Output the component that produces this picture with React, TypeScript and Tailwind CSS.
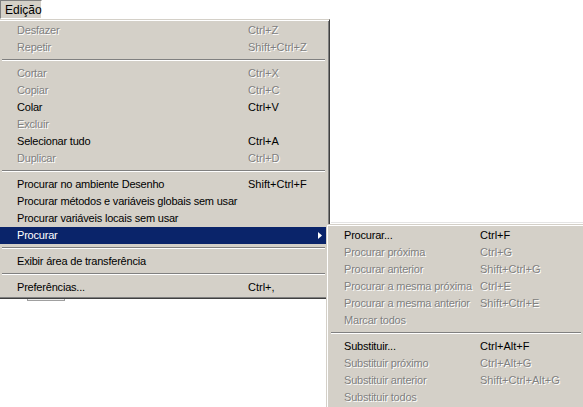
import React from "react";

type Item =
  | { type: "sep" }
  | { type: "item"; label: string; shortcut?: string; disabled?: boolean; active?: boolean; sub?: boolean };

const mainItems: Item[] = [
  { type: "item", label: "Desfazer", shortcut: "Ctrl+Z", disabled: true },
  { type: "item", label: "Repetir", shortcut: "Shift+Ctrl+Z", disabled: true },
  { type: "sep" },
  { type: "item", label: "Cortar", shortcut: "Ctrl+X", disabled: true },
  { type: "item", label: "Copiar", shortcut: "Ctrl+C", disabled: true },
  { type: "item", label: "Colar", shortcut: "Ctrl+V" },
  { type: "item", label: "Excluir", disabled: true },
  { type: "item", label: "Selecionar tudo", shortcut: "Ctrl+A" },
  { type: "item", label: "Duplicar", shortcut: "Ctrl+D", disabled: true },
  { type: "sep" },
  { type: "item", label: "Procurar no ambiente Desenho", shortcut: "Shift+Ctrl+F" },
  { type: "item", label: "Procurar métodos e variáveis globais sem usar" },
  { type: "item", label: "Procurar variáveis locais sem usar" },
  { type: "item", label: "Procurar", active: true, sub: true },
  { type: "sep" },
  { type: "item", label: "Exibir área de transferência" },
  { type: "sep" },
  { type: "item", label: "Preferências...", shortcut: "Ctrl+," },
];

const subItems: Item[] = [
  { type: "item", label: "Procurar...", shortcut: "Ctrl+F" },
  { type: "item", label: "Procurar próxima", shortcut: "Ctrl+G", disabled: true },
  { type: "item", label: "Procurar anterior", shortcut: "Shift+Ctrl+G", disabled: true },
  { type: "item", label: "Procurar a mesma próxima", shortcut: "Ctrl+E", disabled: true },
  { type: "item", label: "Procurar a mesma anterior", shortcut: "Shift+Ctrl+E", disabled: true },
  { type: "item", label: "Marcar todos", disabled: true },
  { type: "sep" },
  { type: "item", label: "Substituir...", shortcut: "Ctrl+Alt+F" },
  { type: "item", label: "Substituir próximo", shortcut: "Ctrl+Alt+G", disabled: true },
  { type: "item", label: "Substituir anterior", shortcut: "Shift+Ctrl+Alt+G", disabled: true },
  { type: "item", label: "Substituir todos", disabled: true },
];

function Sep() {
  return (
    <div className="pt-[3px] pb-[4px] mx-[2px]">
      <div className="h-px bg-[#808080]" />
      <div className="h-px bg-white" />
    </div>
  );
}

function Row({ item, labelW, padL }: { item: Extract<Item, { type: "item" }>; labelW: string; padL: string }) {
  const color = item.active
    ? "bg-[#0a246a] text-white"
    : item.disabled
    ? "text-[#808080] [text-shadow:1px_1px_0_#ffffff]"
    : "text-black";
  return (
    <div className={`flex items-center h-[17px] leading-[17px] whitespace-nowrap ${padL} ${color}`}>
      <div className={`${labelW} shrink-0 tracking-[-0.2px]`}>{item.label}</div>
      <div className="flex-1">{item.shortcut ?? ""}</div>
      {item.sub && (
        <svg width="4" height="7" viewBox="0 0 4 7" className="mr-[5px]">
          <path d="M0 0 L4 3.5 L0 7 Z" fill="#ffffff" />
        </svg>
      )}
    </div>
  );
}

function Menu({ items, labelW, padL }: { items: Item[]; labelW: string; padL: string }) {
  return (
    <>
      {items.map((it, i) =>
        it.type === "sep" ? <Sep key={i} /> : <Row key={i} item={it} labelW={labelW} padL={padL} />
      )}
    </>
  );
}

export default function App() {
  return (
    <div className="relative w-[583px] h-[407px] overflow-hidden bg-white font-['Liberation_Sans',Arial,sans-serif] text-[11px]">
      <div className="flex">
        <div className="h-[19px] w-[42px] bg-[#d4d0c8] border-t border-l border-t-[#808080] border-l-[#808080] border-r border-b border-r-white border-b-white flex items-center pl-[4px] text-[12px] text-black leading-none">
          Edição
        </div>
      </div>

      {/* remnants of the window underneath the menus */}
      <div className="absolute left-[331px] top-[222px] w-[260px] h-px bg-[#e4e4e4]" />
      <div className="absolute left-[27px] top-[298px] w-[38px] h-[3px] border border-[#a0a0a0] bg-[#f0f0f0]" />

      {/* main drop-down menu */}
      <div className="absolute left-[-3px] top-[19px] w-[333px] bg-[#d4d0c8] border border-t-[#d4d0c8] border-l-[#d4d0c8] border-r-[#404040] border-b-[#404040] shadow-[inset_1px_1px_0_#ffffff,inset_-1px_-1px_0_#808080] p-[2px]">
        <Menu items={mainItems} labelW="w-[231px]" padL="pl-[17px]" />
      </div>

      {/* cascading submenu */}
      <div className="absolute left-[326px] top-[224px] w-[260px] bg-[#d4d0c8] border border-t-[#d4d0c8] border-l-[#d4d0c8] border-r-[#404040] border-b-[#404040] shadow-[inset_1px_1px_0_#ffffff,inset_-1px_-1px_0_#808080] p-[2px]">
        <Menu items={subItems} labelW="w-[136px]" padL="pl-[15px]" />
      </div>
    </div>
  );
}
